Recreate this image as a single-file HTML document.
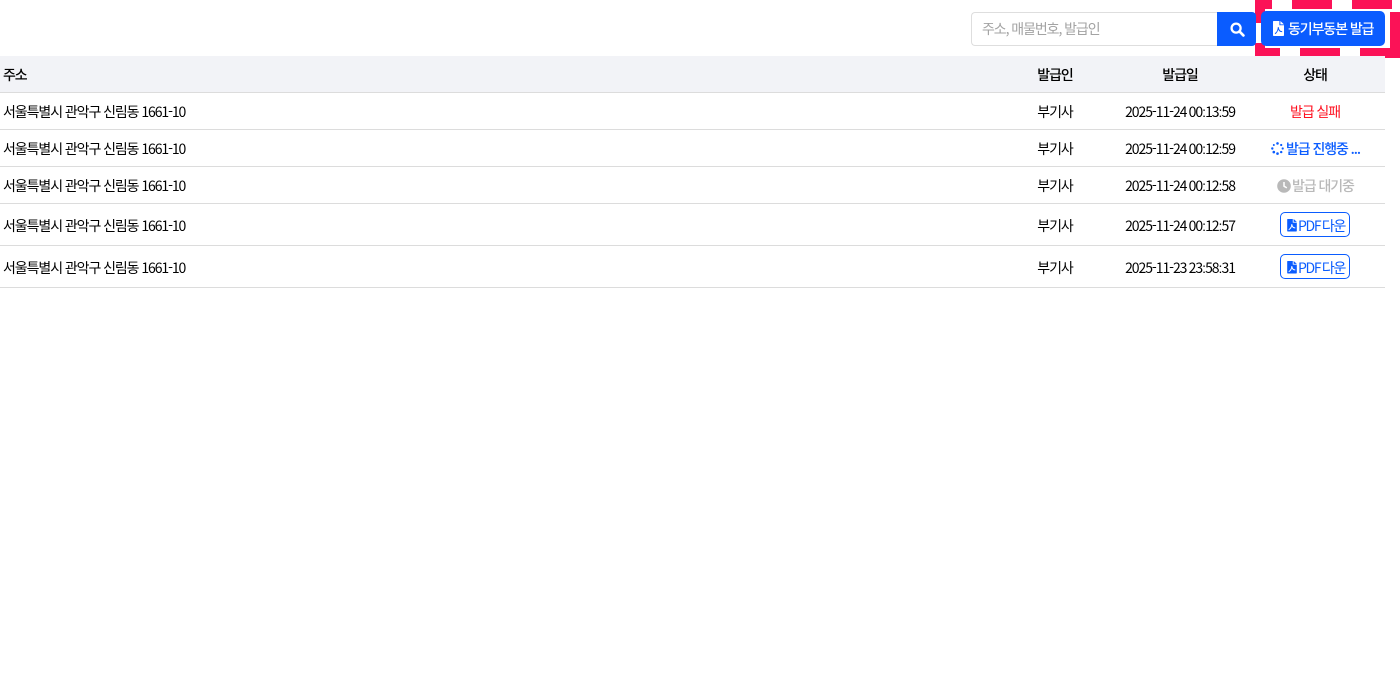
<!DOCTYPE html>
<html lang="ko">
<head>
<meta charset="utf-8">
<title>등기부등본 발급</title>
<style>
html,body{margin:0;padding:0;background:#fff;width:1400px;height:700px;overflow:hidden}
body{position:relative;font-family:"Noto Sans CJK KR","Liberation Sans",sans-serif;font-size:14px;color:#000;letter-spacing:-1.08px;font-feature-settings:"calt" 0,"kern" 1;font-variant-ligatures:none}
.a{position:absolute}
.t{position:absolute;white-space:nowrap;line-height:20px}
.c{transform:translateX(-50%)}
.b{font-weight:500}
.line{position:absolute;left:0;width:1385px;height:1px;background:#dcdcdc}
.pink{position:absolute;background:#fb1257}
.pdfbtn{position:absolute;left:1280px;width:68px;height:23px;border:1px solid #0a5cff;border-radius:5px;background:#fff;color:#0a5cff}
.p{letter-spacing:-1.3px;word-spacing:-.9px}
.p b{font-weight:400;display:inline-block;margin-left:1.6px}
.d{letter-spacing:-1.06px;word-spacing:-.6px}
.d i{font-style:normal;font-family:"Liberation Sans",sans-serif;letter-spacing:-.9px}
svg{display:block}
</style>
</head>
<body>
<div class="pink" style="left:1255px;top:0;width:17px;height:9px"></div>
<div class="pink" style="left:1292px;top:0;width:40px;height:9px"></div>
<div class="pink" style="left:1352px;top:0;width:40px;height:9px"></div>
<div class="pink" style="left:1255px;top:0;width:10px;height:23px"></div>
<div class="pink" style="left:1255px;top:43px;width:10px;height:15px"></div>
<div class="pink" style="left:1255px;top:48px;width:25px;height:10px"></div>
<div class="pink" style="left:1300px;top:48px;width:40px;height:10px"></div>
<div class="pink" style="left:1360px;top:48px;width:40px;height:10px"></div>
<div class="pink" style="left:1390px;top:12px;width:10px;height:46px"></div>

<div class="a" style="left:971px;top:12px;width:246px;height:32px;border:1px solid #dedede;border-right:none;border-radius:4px 0 0 4px;background:#fff"></div>
<div class="t" style="left:982px;top:19px;color:#a3a3a3">주소, 매물번호, 발급인</div>
<div class="a" style="left:1217px;top:12px;width:39px;height:34px;background:#0a5cff;border-radius:0 4px 4px 0"></div>
<svg class="a" style="left:1230px;top:22px" width="15" height="15" viewBox="0 0 15 15"><circle cx="6.1" cy="6.1" r="4.5" fill="none" stroke="#fff" stroke-width="2.3"/><path d="M9.6 9.6L13.4 13.4" stroke="#fff" stroke-width="2.7" stroke-linecap="round"/></svg>

<div class="a" style="left:1261px;top:11px;width:124px;height:35px;background:#0a5cff;border-radius:5px"></div>
<svg class="a" style="left:1273px;top:21px" width="11" height="15" viewBox="0 0 11 15"><path d="M0 .7A.7.7 0 0 1 .7 0H6.4V4.3H11V14.3a.7.7 0 0 1-.7.7H.7a.7.7 0 0 1-.7-.7z" fill="#fff"/><path d="M7.4 0L11 3.4H7.4z" fill="#fff"/><path d="M2 12.8C3.8 11.6 5.2 8.8 5.3 6.2C5.6 9 7 10.8 9.2 10.6" stroke="#0a5cff" stroke-width="1" fill="none"/></svg>
<div class="t b" style="left:1288px;top:19px;color:#fff">동기부동본 발급</div>

<div class="a" style="left:0;top:56px;width:1385px;height:36px;background:#f2f3f7"></div>
<div class="line" style="top:92px"></div>
<div class="t b" style="left:3px;top:65px">주소</div>
<div class="t b c" style="left:1055px;top:65px">발급인</div>
<div class="t b c" style="left:1180px;top:65px">발급일</div>
<div class="t b c" style="left:1315px;top:65px">상태</div>

<div class="line" style="top:129px"></div>
<div class="t" style="left:3px;top:102px">서울특별시 관악구 신림동 1661-10</div>
<div class="t c" style="left:1055px;top:102px">부기사</div>
<div class="t c d" style="left:1180px;top:102px">2025-11-24 00<i>:</i>13<i>:</i>59</div>
<div class="t c" style="left:1315px;top:102px;color:#ff0f1f">발급 실패</div>

<div class="line" style="top:166px"></div>
<div class="t" style="left:3px;top:139px">서울특별시 관악구 신림동 1661-10</div>
<div class="t c" style="left:1055px;top:139px">부기사</div>
<div class="t c d" style="left:1180px;top:139px">2025-11-24 00<i>:</i>12<i>:</i>59</div>
<svg class="a" style="left:1271px;top:142px" width="13" height="13" viewBox="0 0 13 13" fill="#0a5cff"><circle cx="6.5" cy="1.4" r="1.3"/><circle cx="10.2" cy="3" r="1.1"/><circle cx="11.7" cy="6.5" r="1.1"/><circle cx="10.2" cy="10.1" r="1.2"/><circle cx="6.5" cy="11.6" r="1.3"/><circle cx="2.8" cy="10.1" r="1.3"/><circle cx="1.3" cy="6.5" r="1.2"/><circle cx="2.8" cy="3" r="1"/></svg>
<div class="t b" style="left:1286px;top:139px;color:#0a5cff">발급 진행중 ...</div>

<div class="line" style="top:203px"></div>
<div class="t" style="left:3px;top:176px">서울특별시 관악구 신림동 1661-10</div>
<div class="t c" style="left:1055px;top:176px">부기사</div>
<div class="t c d" style="left:1180px;top:176px">2025-11-24 00<i>:</i>12<i>:</i>58</div>
<svg class="a" style="left:1277px;top:179px" width="14" height="14" viewBox="0 0 14 14"><circle cx="7" cy="7" r="6.8" fill="#b9b9b9"/><path d="M7 3v4.2l2.8 1.7" stroke="#fff" stroke-width="1.5" fill="none"/></svg>
<div class="t b" style="left:1292px;top:176px;color:#b9b9b9">발급 대기중</div>

<div class="line" style="top:245px"></div>
<div class="t" style="left:3px;top:216px">서울특별시 관악구 신림동 1661-10</div>
<div class="t c" style="left:1055px;top:216px">부기사</div>
<div class="t c d" style="left:1180px;top:216px">2025-11-24 00<i>:</i>12<i>:</i>57</div>
<div class="pdfbtn" style="top:212px"></div>
<svg class="a" style="left:1287px;top:219px" width="10" height="12.5" viewBox="0 0 10 13"><path d="M0 .6A.6.6 0 0 1 .6 0H5.8V3.8H10V12.4a.6.6 0 0 1-.6.6H.6a.6.6 0 0 1-.6-.6z" fill="#0a5cff"/><path d="M6.7 0L10 3H6.7z" fill="#0a5cff"/><path d="M1.6 11.2C3.3 10.2 4.7 7.8 4.8 5.4C5.1 7.8 6.3 9.4 8.4 9.2" stroke="#fff" stroke-width="1" fill="none"/></svg>
<div class="t p" style="left:1298px;top:216px;color:#0a5cff">PDF<b>다운</b></div>

<div class="line" style="top:287px"></div>
<div class="t" style="left:3px;top:258px">서울특별시 관악구 신림동 1661-10</div>
<div class="t c" style="left:1055px;top:258px">부기사</div>
<div class="t c d" style="left:1180px;top:258px">2025-11-23 23<i>:</i>58<i>:</i>31</div>
<div class="pdfbtn" style="top:254px"></div>
<svg class="a" style="left:1287px;top:261px" width="10" height="12.5" viewBox="0 0 10 13"><path d="M0 .6A.6.6 0 0 1 .6 0H5.8V3.8H10V12.4a.6.6 0 0 1-.6.6H.6a.6.6 0 0 1-.6-.6z" fill="#0a5cff"/><path d="M6.7 0L10 3H6.7z" fill="#0a5cff"/><path d="M1.6 11.2C3.3 10.2 4.7 7.8 4.8 5.4C5.1 7.8 6.3 9.4 8.4 9.2" stroke="#fff" stroke-width="1" fill="none"/></svg>
<div class="t p" style="left:1298px;top:258px;color:#0a5cff">PDF<b>다운</b></div>
</body>
</html>
